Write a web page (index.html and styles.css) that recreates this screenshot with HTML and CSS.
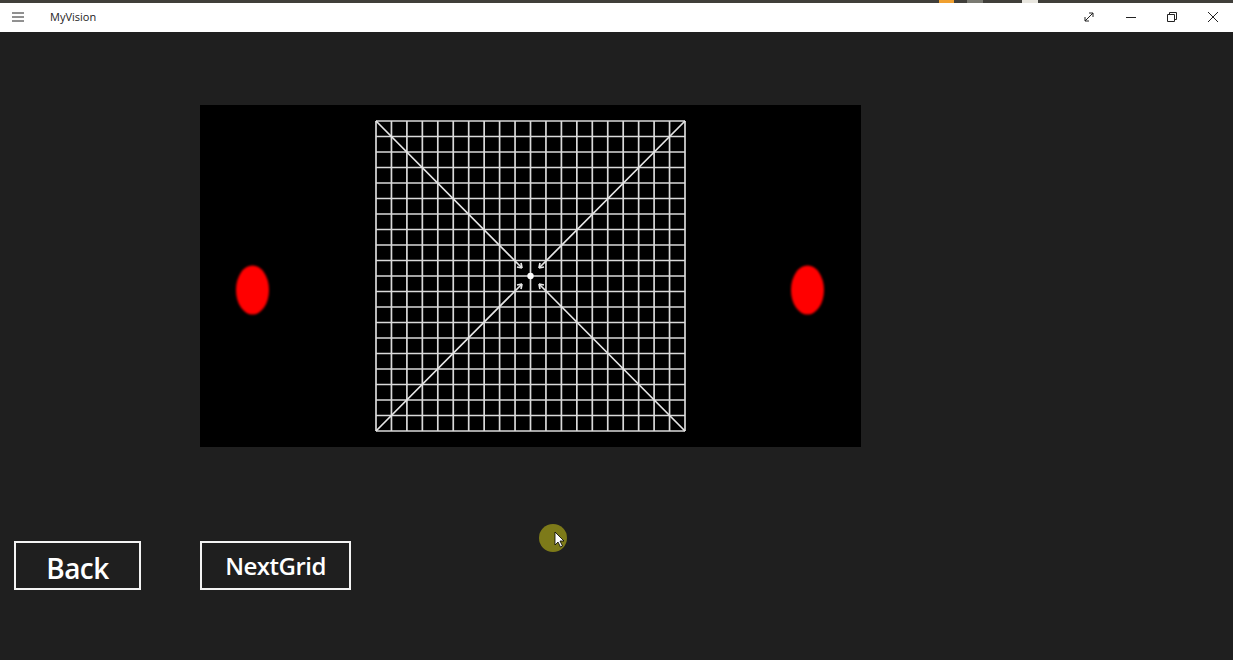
FILE: index.html
```html
<!DOCTYPE html>
<html>
<head>
<meta charset="utf-8">
<link rel="stylesheet" href="styles.css">
</head>
<body>
<div class="taskstrip">
  <span class="ts ts-orange"></span>
  <span class="ts ts-grey"></span>
  <span class="ts ts-light"></span>
</div>
<header class="titlebar">
  <div class="tb-left">
    <svg class="hamburger" width="12" height="10" viewBox="0 0 12 10"><path d="M0 1h12M0 5h12M0 9h12" stroke="#222" stroke-width="1"/></svg>
    <span class="apptitle">MyVision</span>
  </div>
  <div class="tb-right">
    <span class="capbtn"><svg width="12" height="12" viewBox="0 0 12 12"><path d="M2 10L10 2M6 2h4v4M2 6v4h4" fill="none" stroke="#222" stroke-width="1"/></svg></span>
    <span class="capbtn"><svg width="12" height="12" viewBox="0 0 12 12"><path d="M1 6.5h10" stroke="#222" stroke-width="1"/></svg></span>
    <span class="capbtn"><svg width="12" height="12" viewBox="0 0 12 12"><path d="M1.5 3.5h7v7h-7zM3.5 3.5v-2h7v7h-2" fill="none" stroke="#222" stroke-width="1"/></svg></span>
    <span class="capbtn"><svg width="12" height="12" viewBox="0 0 12 12"><path d="M1 1l10 10M11 1L1 11" stroke="#222" stroke-width="1"/></svg></span>
  </div>
</header>
<main class="content">
  <div class="canvas">
    <svg width="661" height="342" viewBox="0 0 661 342">
      <defs>
        <filter id="soft" x="-5%" y="-5%" width="110%" height="110%"><feGaussianBlur stdDeviation="0.5"/></filter>
        <filter id="soft2" x="-20%" y="-20%" width="140%" height="140%"><feGaussianBlur stdDeviation="1.2"/></filter>
      </defs>
      <rect width="661" height="342" fill="#000"/>
      <ellipse cx="52.5" cy="185" rx="16.5" ry="24.5" fill="#ff0000" filter="url(#soft2)"/>
      <ellipse cx="607.5" cy="185" rx="16.5" ry="24.5" fill="#ff0000" filter="url(#soft2)"/>
      <g id="grid" stroke="#dadada" stroke-width="1.7" filter="url(#soft)"></g>
      <g stroke="#e6e6e6" stroke-width="1.7" fill="none" filter="url(#soft)">
        <path d="M176 16L322 163M485 16L339 163M176 326L322 179M485 326L339 179"/>
        <path d="M322 163l-5 -1M322 163l-1 -5"/>
        <path d="M339 163l5 -1M339 163l1 -5"/>
        <path d="M322 179l-5 1M322 179l-1 5"/>
        <path d="M339 179l5 1M339 179l1 5"/>
      </g>
      <circle cx="330.5" cy="171" r="3.2" fill="#fff" filter="url(#soft)"/>
    </svg>
  </div>
  <div class="buttons">
    <button class="btn btn-back">Back</button>
    <button class="btn btn-next">NextGrid</button>
  </div>
  <svg class="cursor" width="32" height="40" viewBox="0 0 32 40">
    <circle cx="14" cy="14" r="14" fill="#7d7a19"/>
    <path d="M16 8v13l3-3 2.5 5 2-1-2.5-5h4z" fill="#fff" stroke="#000" stroke-width="0.8"/>
  </svg>
</main>
<script>
  var g = document.getElementById('grid');
  var ns = 'http://www.w3.org/2000/svg';
  var x0 = 176, y0 = 16, w = 309, h = 310, n = 20;
  for (var i = 0; i <= n; i++) {
    var x = x0 + w * i / n, y = y0 + h * i / n;
    var v = document.createElementNS(ns, 'line');
    v.setAttribute('x1', x); v.setAttribute('x2', x); v.setAttribute('y1', y0); v.setAttribute('y2', y0 + h);
    g.appendChild(v);
    var hl = document.createElementNS(ns, 'line');
    hl.setAttribute('y1', y); hl.setAttribute('y2', y); hl.setAttribute('x1', x0); hl.setAttribute('x2', x0 + w);
    g.appendChild(hl);
  }
</script>
</body>
</html>
```
FILE: styles.css
```css
html, body {
  margin: 0;
  padding: 0;
}
body {
  width: 1233px;
  height: 660px;
  background: #1f1f1f;
  font-family: "Open Sans", "Noto Sans", sans-serif;
  overflow: hidden;
}
.taskstrip {
  height: 3px;
  background: #403f3a;
  display: flex;
  padding-left: 939px;
}
.ts {
  height: 3px;
  display: block;
}
.ts-orange { width: 15px; background: #f0a030; }
.ts-grey { width: 16px; background: #7a7a72; margin-left: 13px; }
.ts-light { width: 16px; background: #e8e6df; margin-left: 39px; }
.titlebar {
  height: 29px;
  background: #ffffff;
  display: flex;
  align-items: center;
  justify-content: space-between;
}
.tb-left {
  display: flex;
  align-items: center;
  padding-left: 12px;
}
.hamburger {
  display: block;
  margin-top: -1px;
}
.apptitle {
  margin-left: 26px;
  font-family: "Open Sans", sans-serif;
  font-size: 11px;
  color: #222;
  margin-top: -2px;
}
.tb-right {
  display: flex;
  padding-right: 0;
}
.capbtn {
  width: 41.4px;
  height: 29px;
  display: flex;
  align-items: center;
  justify-content: center;
}
.capbtn svg { display: block; margin-top: -1px; margin-left: 2px; }
.content {
  position: relative;
  height: 628px;
  padding-top: 73px;
  box-sizing: border-box;
}
.canvas {
  margin-left: 200px;
  width: 661px;
  height: 342px;
}
.canvas svg { display: block; }
.buttons {
  display: flex;
  margin-top: 94px;
  padding-left: 14px;
  gap: 59px;
}
.btn {
  height: 49px;
  background: transparent;
  border: 2px solid #f4f4f4;
  color: #ffffff;
  font-family: "Open Sans", sans-serif;
  font-weight: 600;
  padding: 0;
  margin: 0;
  box-sizing: border-box;
}
.btn-back {
  width: 127px;
  font-size: 28px;
  line-height: 1;
  padding-top: 4px;
  letter-spacing: -0.5px;
}
.btn-next {
  width: 151px;
  font-size: 24px;
  line-height: 1;
  padding-top: 0;
  letter-spacing: -0.5px;
}
.cursor {
  position: absolute;
  left: 539px;
  top: 492px;
}
```
